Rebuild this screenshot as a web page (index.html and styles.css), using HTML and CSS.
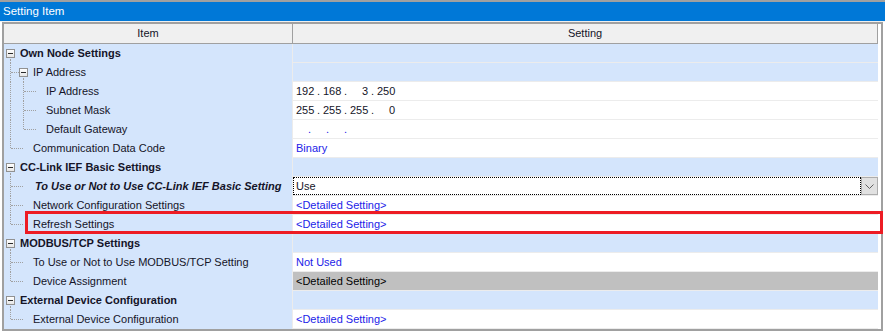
FILE: index.html
```html
<!DOCTYPE html>
<html lang="en">

<head>
    <meta charset="UTF-8">
    <title>Setting Item</title>
    <link rel="stylesheet" href="styles.css">
</head>

<body>
    <div class="titlebar">Setting Item</div>
    <div class="frame">
        <div class="hdr">
            <div class="c1">Item</div>
            <div class="c2">Setting</div>
        </div>

        <div class="row group">
            <div class="item"><span class="g box down"><i></i></span><span class="txt b">Own Node Settings</span></div>
            <div class="val"></div>
        </div>
        <div class="row group">
            <div class="item"><span class="g tee"></span><span class="g box down"><i></i></span><span class="txt">IP Address</span></div>
            <div class="val"></div>
        </div>
        <div class="row">
            <div class="item"><span class="g pipe"></span><span class="g tee"></span><span class="g"></span><span class="txt">IP Address</span></div>
            <div class="val ip"><span class="f">192</span><span class="d">.</span><span class="f">168</span><span class="d">.</span><span class="f">3</span><span class="d">.</span><span class="f">250</span></div>
        </div>
        <div class="row">
            <div class="item"><span class="g pipe"></span><span class="g tee"></span><span class="g"></span><span class="txt">Subnet Mask</span></div>
            <div class="val ip"><span class="f">255</span><span class="d">.</span><span class="f">255</span><span class="d">.</span><span class="f">255</span><span class="d">.</span><span class="f">0</span></div>
        </div>
        <div class="row">
            <div class="item"><span class="g pipe"></span><span class="g elbow"></span><span class="g"></span><span class="txt">Default Gateway</span></div>
            <div class="val ip empty"><span class="f"></span><span class="d">.</span><span class="f"></span><span class="d">.</span><span class="f"></span><span class="d">.</span></div>
        </div>
        <div class="row">
            <div class="item"><span class="g elbow"></span><span class="g"></span><span class="txt">Communication Data Code</span></div>
            <div class="val blue">Binary</div>
        </div>

        <div class="row group">
            <div class="item"><span class="g box down"><i></i></span><span class="txt b">CC-Link IEF Basic Settings</span></div>
            <div class="val"></div>
        </div>
        <div class="row">
            <div class="item"><span class="g tee"></span><span class="g"></span><span class="txt bi">To Use or Not to Use CC-Link IEF Basic Setting</span></div>
            <div class="val combo">
                <div class="focus">Use</div>
                <div class="btn">
                    <svg width="9" height="5" viewBox="0 0 9 5"><path d="M0.5 0.5 L4.5 4.5 L8.5 0.5" fill="none" stroke="#606060" stroke-width="1"/></svg>
                </div>
            </div>
        </div>
        <div class="row">
            <div class="item"><span class="g tee"></span><span class="g"></span><span class="txt">Network Configuration Settings</span></div>
            <div class="val blue">&lt;Detailed Setting&gt;</div>
        </div>
        <div class="row">
            <div class="item"><span class="g elbow"></span><span class="g"></span><span class="txt">Refresh Settings</span></div>
            <div class="val blue">&lt;Detailed Setting&gt;</div>
        </div>

        <div class="row group">
            <div class="item"><span class="g box down"><i></i></span><span class="txt b">MODBUS/TCP Settings</span></div>
            <div class="val"></div>
        </div>
        <div class="row">
            <div class="item"><span class="g tee"></span><span class="g"></span><span class="txt">To Use or Not to Use MODBUS/TCP Setting</span></div>
            <div class="val blue">Not Used</div>
        </div>
        <div class="row">
            <div class="item"><span class="g elbow"></span><span class="g"></span><span class="txt">Device Assignment</span></div>
            <div class="val sel">&lt;Detailed Setting&gt;</div>
        </div>

        <div class="row group">
            <div class="item"><span class="g box down"><i></i></span><span class="txt b">External Device Configuration</span></div>
            <div class="val"></div>
        </div>
        <div class="row">
            <div class="item"><span class="g elbow"></span><span class="g"></span><span class="txt">External Device Configuration</span></div>
            <div class="val blue">&lt;Detailed Setting&gt;</div>
        </div>
    </div>

    <!-- red annotation frame around Refresh Settings -->
    <div class="mark"></div>
</body>

</html>
```

FILE: styles.css
```css
body {
    margin: 0;
    width: 885px;
    height: 332px;
    background-color: #ffffff;
    font-family: "Liberation Sans", Arial, sans-serif;
    font-size: 11px;
    color: #141428;
    position: relative;
    overflow: hidden;
}

.titlebar {
    border-top: 2px solid #a0a0a0;
    background-color: #0078d7;
    color: #ffffff;
    height: 19px;
    line-height: 19px;
    padding-left: 3px;
    font-size: 11.5px;
    border-bottom: 1px solid #f0f0f0;
}

.frame {
    margin: 0 2px;
    border: 2px solid #a0a0a0;
    padding-right: 3px;
    background-color: #ffffff;
}

.hdr {
    display: flex;
    height: 19px;
    line-height: 19px;
    background-color: #f0f0f0;
    border-bottom: 1px solid #a0a0a0;
    border-right: 1px solid #a0a0a0;
    text-align: center;
}

.hdr .c1 {
    width: 288px;
    border-right: 1px solid #a0a0a0;
}

.hdr .c2 {
    flex: 1;
}

.row {
    display: flex;
    height: 19px;
}

.item {
    width: 288px;
    height: 19px;
    border-right: 1px solid #ececec;
    background-color: #d4e5fc;
    display: flex;
    flex: none;
}

.val {
    flex: 1;
    height: 18px;
    line-height: 18px;
    border-bottom: 1px solid #ececec;
    padding-left: 3px;
    white-space: nowrap;
}

.group .val {
    background-color: #d4e5fc;
}

.txt {
    line-height: 19px;
    margin-left: 3px;
    white-space: nowrap;
}

.txt.b {
    font-weight: bold;
}

.txt.bi {
    font-weight: bold;
    font-style: italic;
    margin-left: 5px;
}

.blue {
    color: #2222e8;
}

.sel {
    background-color: #c0c0c0;
    color: #000000;
}

/* tree guides */
.g {
    width: 13px;
    height: 19px;
    flex: none;
    position: relative;
}

.g.pipe::before,
.g.tee::before,
.g.elbow::before {
    content: '';
    position: absolute;
    left: 6px;
    top: 0;
    height: 19px;
    border-left: 1px dotted #a0a0a0;
}

.g.elbow::before {
    height: 9px;
}

.g.tee::after,
.g.elbow::after {
    content: '';
    position: absolute;
    left: 7px;
    top: 9px;
    width: 12px;
    border-top: 1px dotted #a0a0a0;
}

.g.box i {
    position: absolute;
    left: 2px;
    top: 5px;
    width: 7px;
    height: 7px;
    border: 1px solid #919191;
    background: linear-gradient(#ffffff, #e6e6e6);
}

.g.box i::after {
    content: '';
    position: absolute;
    left: 1px;
    top: 3px;
    width: 5px;
    height: 1px;
    background-color: #2a2a2a;
}

.g.box.down::before {
    content: '';
    position: absolute;
    left: 6px;
    top: 15px;
    height: 4px;
    border-left: 1px dotted #a0a0a0;
}

/* ip address control */
.ip .f {
    display: inline-block;
    width: 18px;
    text-align: right;
}

.ip .d {
    display: inline-block;
    width: 9px;
    text-align: center;
}

.ip.empty {
    color: #2222e8;
}

.ip.empty .f {
    width: 9px;
}

/* combo box */
.combo {
    display: flex;
    padding-left: 0;
    background-color: #ffffff;
}

.combo .focus {
    flex: 1;
    height: 16px;
    line-height: 16px;
    border: 1px dotted #000000;
    padding-left: 2px;
}

.combo .btn {
    width: 15px;
    height: 16px;
    border: 1px solid #adadad;
    background-color: #e1e1e1;
    display: flex;
    align-items: center;
    justify-content: center;
}

.mark {
    position: absolute;
    left: 25px;
    top: 211px;
    width: 852px;
    height: 17px;
    border: 3px solid #ed1c24;
}
```
